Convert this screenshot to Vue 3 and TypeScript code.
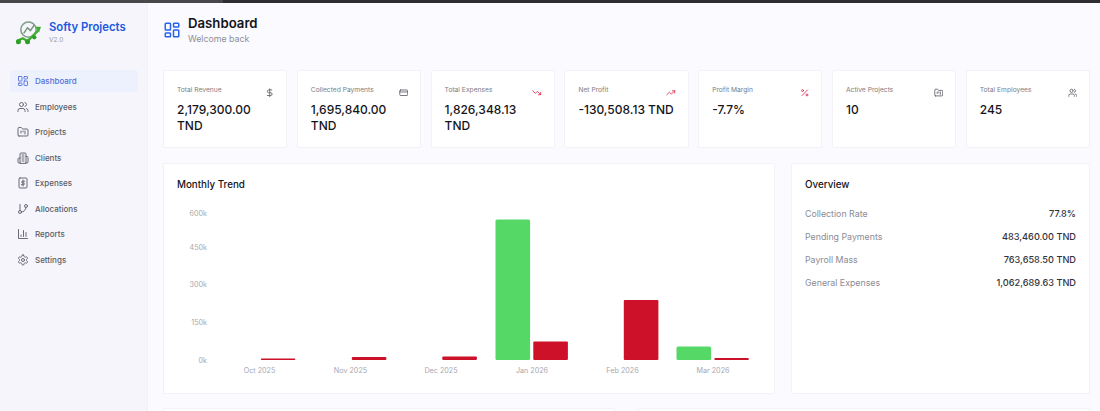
<script setup lang="ts">
interface Stat { label: string; value: string; icon: string; tone?: string }
const nav = [
  { label: 'Dashboard', icon: 'dash' }, { label: 'Employees', icon: 'users' },
  { label: 'Projects', icon: 'folder' }, { label: 'Clients', icon: 'building' },
  { label: 'Expenses', icon: 'receipt' }, { label: 'Allocations', icon: 'branch' },
  { label: 'Reports', icon: 'bars' }, { label: 'Settings', icon: 'gear' },
]
const stats: Stat[] = [
  { label: 'Total Revenue', value: '2,179,300.00 TND', icon: 'dollar' },
  { label: 'Collected Payments', value: '1,695,840.00 TND', icon: 'card' },
  { label: 'Total Expenses', value: '1,826,348.13 TND', icon: 'down', tone: 'red' },
  { label: 'Net Profit', value: '-130,508.13 TND', icon: 'up', tone: 'red' },
  { label: 'Profit Margin', value: '-7.7%', icon: 'percent', tone: 'red' },
  { label: 'Active Projects', value: '10', icon: 'folder' },
  { label: 'Total Employees', value: '245', icon: 'users' },
]
const overview = [
  ['Collection Rate', '77.8%'], ['Pending Payments', '483,460.00 TND'],
  ['Payroll Mass', '763,658.50 TND'], ['General Expenses', '1,062,689.63 TND'],
]
const yTicks = [['600k', 21], ['450k', 55], ['300k', 92], ['150k', 130], ['0k', 168]] as const
const months = [
  { label: 'Oct 2025', cx: 82.5, g: 0, r: 1.5 }, { label: 'Nov 2025', cx: 173.5, g: 0, r: 3 },
  { label: 'Dec 2025', cx: 264, g: 0, r: 3.5 }, { label: 'Jan 2026', cx: 355, g: 140.5, r: 18.5 },
  { label: 'Feb 2026', cx: 445.5, g: 0, r: 60 }, { label: 'Mar 2026', cx: 536, g: 13.5, r: 2 },
]
const base = 168
const paths: Record<string, string[]> = {
  users: ['M16 21v-2a4 4 0 0 0-4-4H6a4 4 0 0 0-4 4v2', 'M22 21v-2a4 4 0 0 0-3-3.87', 'M16 3.13a4 4 0 0 1 0 7.75', 'M13 7a4 4 0 1 1-8 0a4 4 0 1 1 8 0'],
  folder: ['M4 20h16a2 2 0 0 0 2-2V8a2 2 0 0 0-2-2h-7.93a2 2 0 0 1-1.66-.9l-.82-1.2A2 2 0 0 0 7.93 3H4a2 2 0 0 0-2 2v13c0 1.1.9 2 2 2Z', 'M8 10v4', 'M12 10v2', 'M16 10v6'],
  building: ['M6 22V4a2 2 0 0 1 2-2h8a2 2 0 0 1 2 2v18Z', 'M6 12H4a2 2 0 0 0-2 2v6a2 2 0 0 0 2 2h2', 'M18 9h2a2 2 0 0 1 2 2v9a2 2 0 0 1-2 2h-2', 'M10 6h4', 'M10 10h4', 'M10 14h4', 'M10 18h4'],
  receipt: ['M6 2h12a2 2 0 0 1 2 2v16a2 2 0 0 1-2 2H6a2 2 0 0 1-2-2V4a2 2 0 0 1 2-2Z', 'M12 6v12', 'M15.5 8.5H11a1.75 1.75 0 0 0 0 3.5h2a1.75 1.75 0 0 1 0 3.5H8.5'],
  branch: ['M6 3v12', 'M21 6a3 3 0 1 1-6 0a3 3 0 1 1 6 0', 'M9 18a3 3 0 1 1-6 0a3 3 0 1 1 6 0', 'M18 9a9 9 0 0 1-9 9'],
  bars: ['M3 3v18h18', 'M18 17V9', 'M13 17V5', 'M8 17v-3'],
  gear: ['M12.22 2h-.44a2 2 0 0 0-2 2v.18a2 2 0 0 1-1 1.73l-.43.25a2 2 0 0 1-2 0l-.15-.08a2 2 0 0 0-2.73.73l-.22.38a2 2 0 0 0 .73 2.73l.15.1a2 2 0 0 1 1 1.72v.51a2 2 0 0 1-1 1.74l-.15.09a2 2 0 0 0-.73 2.73l.22.38a2 2 0 0 0 2.73.73l.15-.08a2 2 0 0 1 2 0l.43.25a2 2 0 0 1 1 1.73V20a2 2 0 0 0 2 2h.44a2 2 0 0 0 2-2v-.18a2 2 0 0 1 1-1.73l.43-.25a2 2 0 0 1 2 0l.15.08a2 2 0 0 0 2.73-.73l.22-.39a2 2 0 0 0-.73-2.73l-.15-.08a2 2 0 0 1-1-1.74v-.5a2 2 0 0 1 1-1.74l.15-.09a2 2 0 0 0 .73-2.73l-.22-.38a2 2 0 0 0-2.73-.73l-.15.08a2 2 0 0 1-2 0l-.43-.25a2 2 0 0 1-1-1.73V4a2 2 0 0 0-2-2z', 'M15 12a3 3 0 1 1-6 0a3 3 0 1 1 6 0'],
  dash: ['M4 3h5a1 1 0 0 1 1 1v7a1 1 0 0 1-1 1H4a1 1 0 0 1-1-1V4a1 1 0 0 1 1-1Z', 'M15 3h5a1 1 0 0 1 1 1v3a1 1 0 0 1-1 1h-5a1 1 0 0 1-1-1V4a1 1 0 0 1 1-1Z', 'M15 12h5a1 1 0 0 1 1 1v7a1 1 0 0 1-1 1h-5a1 1 0 0 1-1-1v-7a1 1 0 0 1 1-1Z', 'M4 16h5a1 1 0 0 1 1 1v3a1 1 0 0 1-1 1H4a1 1 0 0 1-1-1v-3a1 1 0 0 1 1-1Z'],
  dollar: ['M12 2v20', 'M17 5H9.5a3.5 3.5 0 0 0 0 7h5a3.5 3.5 0 0 1 0 7H6'],
  card: ['M4 5h16a2 2 0 0 1 2 2v10a2 2 0 0 1-2 2H4a2 2 0 0 1-2-2V7a2 2 0 0 1 2-2Z', 'M2 10h20'],
  down: ['M22 17 13.5 8.5 8.5 13.5 2 7', 'M16 17h6v-6'],
  up: ['M22 7 13.5 15.5 8.5 10.5 2 17', 'M16 7h6v6'],
  percent: ['M19 5 5 19', 'M9 6.5a2.5 2.5 0 1 1-5 0a2.5 2.5 0 1 1 5 0', 'M20 17.5a2.5 2.5 0 1 1-5 0a2.5 2.5 0 1 1 5 0'],
}
</script>

<template>
  <div class="page">
    <div class="topbar"></div>
    <div class="shell">
      <aside class="sidebar">
        <div class="brand">
          <svg class="logo" viewBox="0 0 28 26" fill="none">
            <circle cx="14" cy="10" r="8" stroke="#7f9f86" stroke-width="1.6" />
            <path d="M9 14l4-6 3 3 4-6" stroke="#6d8f74" stroke-width="1.4" />
            <path d="M2 22l6-3 5 3 6-6 5-5" stroke="#3fae2e" stroke-width="2.4" />
            <path d="M21 7h6l-2 6z" fill="#3fae2e" />
            <circle cx="3.5" cy="22.5" r="2.6" fill="#2f9e25" />
            <circle cx="13" cy="22.5" r="2.6" fill="#2f9e25" />
            <circle cx="20" cy="18" r="2.2" fill="#2f9e25" />
          </svg>
          <div class="brand-text">
            <div class="brand-name">Softy Projects</div>
            <div class="brand-version">V2.0</div>
          </div>
        </div>
        <nav class="nav">
          <a v-for="(item, i) in nav" :key="item.label" class="nav-item" :class="{ active: i === 0 }">
            <svg class="nav-icon" viewBox="0 0 24 24" fill="none" stroke="currentColor" stroke-width="1.8" stroke-linecap="round" stroke-linejoin="round">
              <path v-for="d in paths[item.icon]" :key="d" :d="d" />
            </svg>
            <span>{{ item.label }}</span>
          </a>
        </nav>
      </aside>

      <main class="main">
        <header class="header">
          <svg class="header-icon" viewBox="0 0 24 24" fill="none" stroke="#2563eb" stroke-width="2" stroke-linecap="round" stroke-linejoin="round">
            <path v-for="d in paths.dash" :key="d" :d="d" />
          </svg>
          <div>
            <h1>Dashboard</h1>
            <p>Welcome back</p>
          </div>
        </header>

        <section class="stats">
          <div v-for="s in stats" :key="s.label" class="card stat">
            <div class="stat-head">
              <div class="stat-label">{{ s.label }}</div>
              <svg class="stat-icon" :class="s.tone" viewBox="0 0 24 24" fill="none" stroke="currentColor" stroke-width="2" stroke-linecap="round" stroke-linejoin="round">
                <path v-for="d in paths[s.icon]" :key="d" :d="d" />
              </svg>
            </div>
            <div class="stat-value">{{ s.value }}</div>
          </div>
        </section>

        <section class="panels">
          <div class="card chart-card">
            <h2>Monthly Trend</h2>
            <svg class="chart" viewBox="0 0 598 186" width="598" height="186">
              <text v-for="t in yTicks" :key="t[0]" class="tick" x="30" :y="t[1] + 3" text-anchor="end">{{ t[0] }}</text>
              <template v-for="m in months" :key="m.label">
                <rect v-if="m.g" class="bar-g" :x="m.cx - 36.5" :y="base - m.g" width="34.6" :height="m.g" rx="1.5" />
                <rect class="bar-r" :x="m.cx + 1.3" :y="base - m.r" width="34.6" :height="m.r" rx="1" />
                <text class="tick" :x="m.cx" y="181" text-anchor="middle">{{ m.label }}</text>
              </template>
            </svg>
          </div>
          <div class="card overview">
            <h2>Overview</h2>
            <div v-for="row in overview" :key="row[0]" class="ov-row">
              <span class="ov-label">{{ row[0] }}</span>
              <span class="ov-value">{{ row[1] }}</span>
            </div>
          </div>
        </section>

        <section class="lower">
          <div class="card lower-card"></div>
          <div class="card lower-card"></div>
        </section>
      </main>
    </div>
  </div>
</template>

<style>
html, body { margin: 0; height: 100%; overflow: hidden; background: #fafaff; }
</style>

<style scoped>
.page { width: 1100px; height: 411px; overflow: hidden; font-family: Inter, "Noto Sans", sans-serif; background: #fafaff; color: #111218; }
.topbar { height: 3px; background: linear-gradient(90deg, #48484a 0 223px, #2e2e30 223px); }
.shell { display: flex; height: 408px; }
.sidebar { width: 148px; flex: none; background: #f5f5fb; border-right: 1px solid #f1f1f7; box-sizing: border-box; padding: 14px 10px 0; }
.brand { display: flex; gap: 7px; height: 53px; padding: 0 0 0 5px; align-items: flex-start; }
.logo { width: 27px; height: 25px; margin-top: 3px; flex: none; }
.brand-text { padding-top: 3px; }
.brand-name { font-size: 11.3px; font-weight: 600; color: #2158e0; line-height: 14px; }
.brand-version { font-size: 6.5px; color: #9a9aa2; line-height: 9px; margin-top: 2px; }
.nav { display: flex; flex-direction: column; gap: 3.5px; }
.nav-item { display: flex; align-items: center; gap: 6px; height: 22px; padding-left: 7px; width: 128px; box-sizing: border-box; font-size: 8px; font-weight: 500; color: #5c5c65; border-radius: 3px; }
.nav-item.active { background: #edf0fd; color: #5470dc; }
.nav-icon { width: 12px; height: 12px; flex: none; }
.main { flex: 1; min-width: 0; padding: 0 10px 0 15px; box-sizing: border-box; }
.header { display: flex; align-items: center; gap: 7px; height: 45px; padding-top: 9px; box-sizing: border-box; }
.header-icon { width: 18px; height: 18px; flex: none; }
h1 { margin: 0; font-size: 13.2px; line-height: 16px; font-weight: 600; color: #14141a; }
.header p { margin: 2px 0 0; font-size: 8.8px; line-height: 12px; color: #8e8e97; }
.stats { display: grid; grid-template-columns: repeat(7, 1fr); gap: 9.6px; margin-top: 22px; }
.card { background: #fff; border: 1px solid #f2f2f7; border-radius: 2px; box-sizing: border-box; }
.stat { height: 78px; padding: 15px 12px 0 13px; }
.stat-head { display: flex; justify-content: space-between; align-items: flex-start; }
.stat-label { font-size: 6.7px; line-height: 9px; color: #7c7c85; white-space: nowrap; }
.stat-value { font-size: 12px; font-weight: 500; line-height: 16px; margin-top: 4px; color: #15151b; }
.stat-icon { width: 9.5px; height: 9.5px; flex: none; margin-top: 2px; color: #55555e; }
.stat-icon.red { color: #dc2045; }
.panels { display: flex; gap: 16px; margin-top: 15px; }
.chart-card { width: 612px; height: 231px; padding: 14px 0 0 13px; flex: none; }
h2 { margin: 0; font-size: 9.8px; line-height: 14px; font-weight: 500; color: #15151b; }
.chart { display: block; overflow: visible; }
.tick { font-size: 7.2px; fill: #a8a8b0; font-family: Inter, sans-serif; }
.bar-g { fill: #55d866; }
.bar-r { fill: #cc1128; }
.overview { flex: 1; height: 231px; padding: 14px 13px 0; }
.overview h2 { margin-bottom: 10px; }
.ov-row { display: flex; justify-content: space-between; align-items: center; height: 23px; font-size: 8.8px; }
.ov-label { color: #8b8b94; }
.ov-value { color: #33333b; font-size: 9.2px; font-weight: 500; }
.lower { display: flex; gap: 23px; margin-top: 14px; }
.lower-card { flex: 1; height: 40px; }
</style>
